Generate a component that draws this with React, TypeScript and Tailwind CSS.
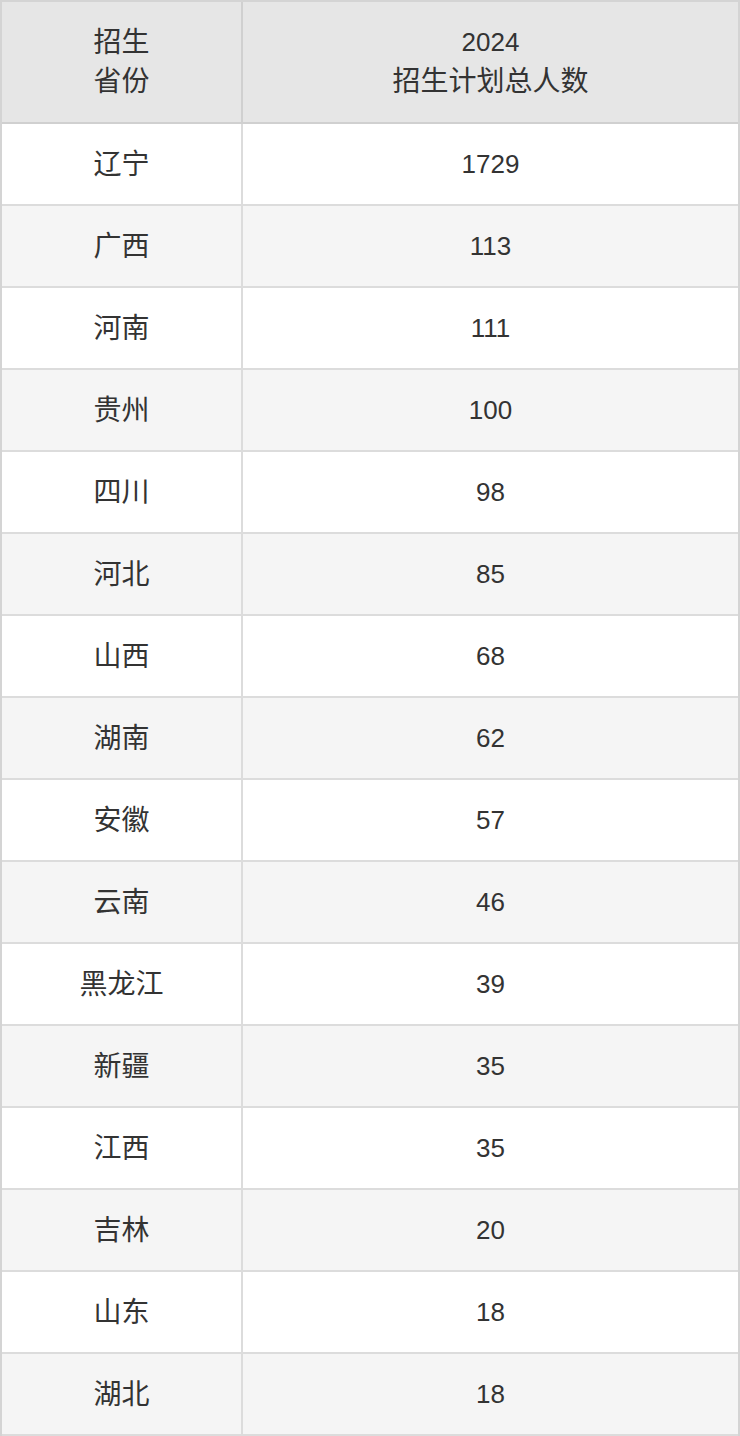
const ROWS: [string, number][] = [
  ["辽宁", 1729],
  ["广西", 113],
  ["河南", 111],
  ["贵州", 100],
  ["四川", 98],
  ["河北", 85],
  ["山西", 68],
  ["湖南", 62],
  ["安徽", 57],
  ["云南", 46],
  ["黑龙江", 39],
  ["新疆", 35],
  ["江西", 35],
  ["吉林", 20],
  ["山东", 18],
  ["湖北", 18],
];

export default function App() {
  return (
    <div
      className="w-[740px] border-x-2 border-t-2 border-[#d4d4d4] text-[26px] leading-[39px] text-[#333333]"
      style={{ fontFamily: '"Liberation Sans", "Noto Sans CJK SC", sans-serif' }}
    >
      {/* Header */}
      <div className="flex h-[122px] border-b-2 border-[#d0d0d0] bg-[#e6e6e6]">
        <div className="flex w-[241px] items-center justify-center border-r-2 border-[#d0d0d0] text-center text-[28px]">
          招生
          <br />
          省份
        </div>
        <div className="flex flex-1 items-center justify-center text-center">
          <div>
            <div>2024</div>
            <div className="text-[28px]">招生计划总人数</div>
          </div>
        </div>
      </div>

      {/* Rows */}
      {ROWS.map(([province, count], i) => (
        <div
          key={province + i}
          className={`flex h-[82px] border-b-2 border-[#dcdcdc] ${
            i % 2 === 0 ? "bg-white" : "bg-[#f5f5f5]"
          }`}
        >
          <div className="flex w-[241px] items-center justify-center border-r-2 border-[#dcdcdc] text-[28px]">
            {province}
          </div>
          <div className="flex flex-1 items-center justify-center">{count}</div>
        </div>
      ))}
    </div>
  );
}
